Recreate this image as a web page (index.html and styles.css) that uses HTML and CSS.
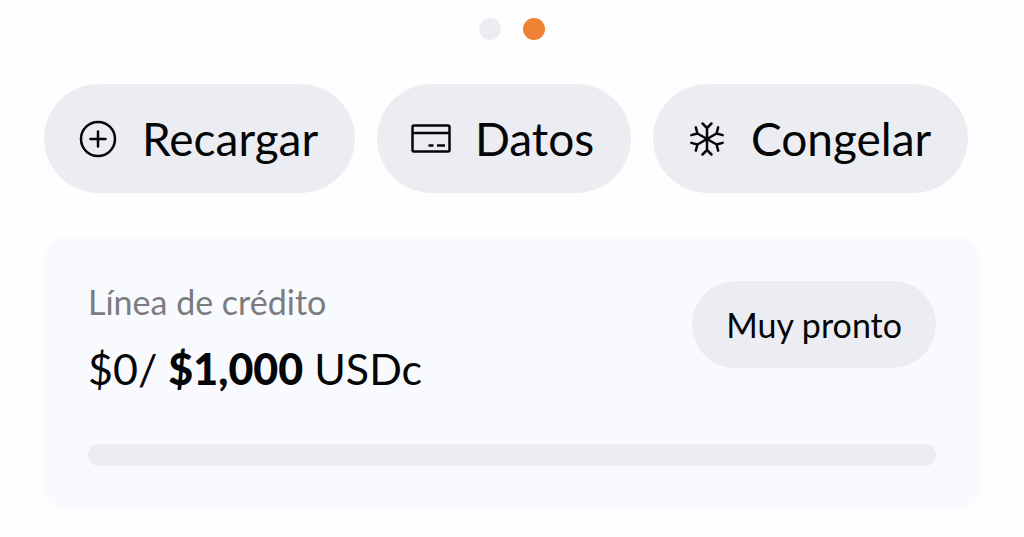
FILE: index.html
```
<!DOCTYPE html>
<html lang="es">
<head>
    <meta charset="UTF-8">
    <meta name="viewport" content="width=device-width, initial-scale=1.0">
    <title>Tarjeta</title>
    <link rel="stylesheet" href="styles.css">
</head>
<body>
    <main class="wallet">
        <div class="dots">
            <span class="dot"></span>
            <span class="dot active"></span>
        </div>

        <div class="actions">
            <button class="action" type="button">
                <svg class="icon" viewBox="0 0 40 40" aria-hidden="true">
                    <circle cx="20" cy="20" r="17"/>
                    <path d="M20 12.5v15M12.5 20h15"/>
                </svg>
                Recargar
            </button>
            <button class="action" type="button">
                <svg class="icon" viewBox="0 0 40 40" aria-hidden="true">
                    <rect x="1.5" y="6.5" width="37" height="26" rx="1.5"/>
                    <path class="square" d="M2 14h36M17.500 26.500h5M26 26.500h8"/>
                </svg>
                Datos
            </button>
            <button class="action" type="button">
                <svg class="icon" viewBox="0 0 40 40" aria-hidden="true">
                    <g id="arm">
                        <path d="M20 20V8.500M15.500 4.500L20 9L24.500 4.500"/>
                    </g>
                    <use href="#arm" transform="rotate(60 20 20)"/>
                    <use href="#arm" transform="rotate(120 20 20)"/>
                    <use href="#arm" transform="rotate(180 20 20)"/>
                    <use href="#arm" transform="rotate(240 20 20)"/>
                    <use href="#arm" transform="rotate(300 20 20)"/>
                </svg>
                Congelar
            </button>
        </div>

        <section class="credit">
            <div class="creditTop">
                <div>
                    <div class="creditLabel" id="creditLabel">Línea de crédito</div>
                    <div class="amount">$0/ <b>$1,000</b> USDc</div>
                </div>
                <button class="soon" type="button">Muy pronto</button>
            </div>
            <div class="bar" role="progressbar" aria-labelledby="creditLabel" aria-valuemin="0" aria-valuemax="1000" aria-valuenow="0"></div>
        </section>
    </main>
</body>
</html>
```
FILE: styles.css
```
* {
    box-sizing: border-box;
}
body {
    margin: 0;
    background-color: #fefefe;
    color: #050607;
    font-family: Lato, sans-serif;
}
button {
    border: 0;
    color: inherit;
    font-family: inherit;
    white-space: nowrap;
}
.wallet {
    padding: 18px 44px 28px;
}
.dots {
    display: flex;
    justify-content: center;
    gap: 22px;
}
.dot {
    width: 22px;
    height: 22px;
    border-radius: 50%;
    background-color: #ecedf2;
}
.dot.active {
    background-color: #ee8133;
}
.actions {
    display: flex;
    gap: 22px;
    margin-top: 44px;
    padding-right: 12px;
}
.action {
    display: flex;
    flex: 1 1 auto;
    align-items: center;
    gap: 24px;
    height: 109px;
    padding: 0 24px 0 34px;
    border-radius: 55px;
    background-color: #ecedf2;
    font-size: 46px;
}
.icon {
    flex: none;
    width: 40px;
    height: 40px;
    fill: none;
    stroke: #050607;
    stroke-width: 2.5;
    stroke-linecap: round;
    stroke-linejoin: round;
}
.square {
    stroke-linecap: butt;
}
.credit {
    margin-top: 44px;
    padding: 44px;
    border-radius: 22px;
    background-color: #f9fafd;
}
.creditTop {
    display: flex;
    justify-content: space-between;
    align-items: flex-start;
}
.creditLabel {
    color: #7b7c80;
    font-size: 34px;
    line-height: 42px;
}
.amount {
    margin-top: 16px;
    font-size: 43px;
    line-height: 60px;
}
.amount b {
    font-weight: 900;
}
.soon {
    height: 87px;
    padding: 0 34px;
    border-radius: 44px;
    background-color: #ecedf2;
    font-size: 34px;
}
.bar {
    height: 22px;
    margin-top: 45px;
    border-radius: 11px;
    background-color: #ecedf2;
}
```
